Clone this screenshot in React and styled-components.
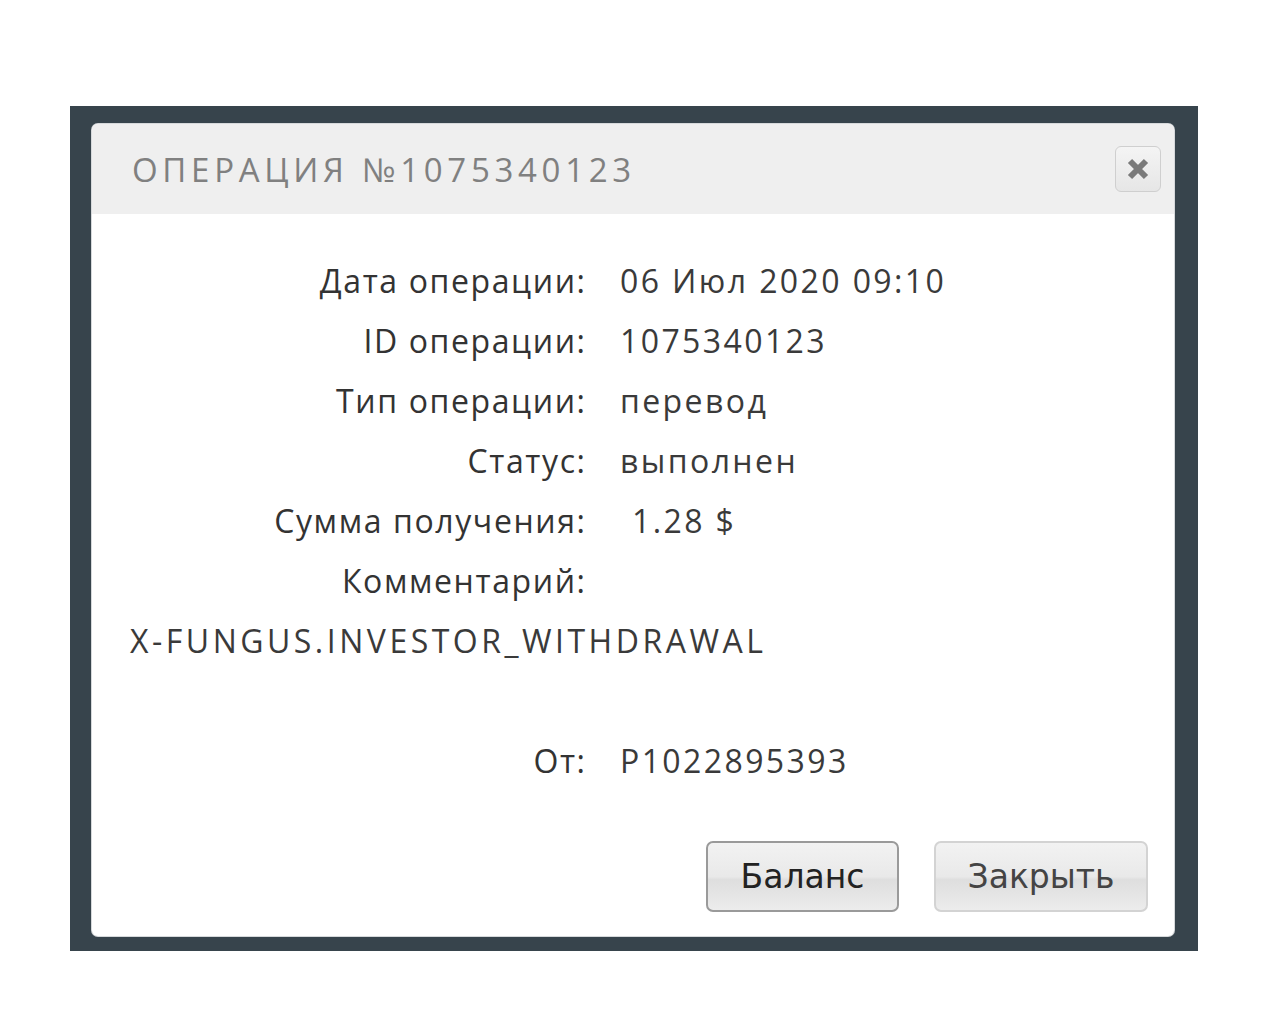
import React from 'react';
import styled, { createGlobalStyle } from 'styled-components';

const Global = createGlobalStyle`
  html, body { margin: 0; padding: 0; background: #fff; }
  body { width: 1280px; height: 1024px; overflow: hidden; }
`;

const Page = styled.div`
  width: 1280px;
  height: 1024px;
  padding: 106px 82px 73px 70px;
  box-sizing: border-box;
`;

const Backdrop = styled.div`
  height: 100%;
  background: #37444c;
  padding: 18px 24px 15px 22px;
  box-sizing: border-box;
`;

const Dialog = styled.div`
  height: 100%;
  background: #fff;
  border-radius: 6px;
  overflow: hidden;
  display: flex;
  flex-direction: column;
  box-shadow: 0 0 0 1px #d6d9db;
`;

const Header = styled.div`
  height: 90px;
  flex: none;
  background: #efefef;
  display: flex;
  align-items: center;
  justify-content: space-between;
  padding: 0 13px 0 40px;
`;

const Title = styled.h1`
  margin: 0;
  font-family: "Open Sans", sans-serif;
  font-weight: 400;
  font-size: 33px;
  letter-spacing: 4.7px;
  color: #808080;
`;

const CloseBtn = styled.button`
  width: 46px;
  height: 46px;
  border: 1px solid #cfcfcf;
  border-radius: 6px;
  background: linear-gradient(#f4f4f4, #e6e6e6);
  display: flex;
  align-items: center;
  justify-content: center;
  padding: 0;
`;

const Body = styled.div`
  flex: 1;
  display: flex;
  flex-direction: column;
  padding: 36px 26px 24px 38px;
`;

const Grid = styled.div`
  display: grid;
  grid-template-columns: 455px 1fr;
  column-gap: 35px;
  grid-auto-rows: 60px;
  align-items: center;
`;

const Label = styled.div`
  font-family: "Open Sans", sans-serif;
  font-size: 32px;
  font-weight: 500;
  letter-spacing: 1.6px;
  margin-right: -1.6px;
  color: #333;
  text-align: right;
`;

const Value = styled.div`
  font-family: "Open Sans", sans-serif;
  font-size: 32px;
  letter-spacing: 2.4px;
  color: #3a3a3a;
  padding-left: ${p => p.$indent || 0}px;
`;

const Comment = styled.div`
  font-family: "Open Sans", sans-serif;
  font-size: 32px;
  letter-spacing: 3.5px;
  color: #3a3a3a;
  height: 60px;
  display: flex;
  align-items: center;
  margin-bottom: 60px;
`;

const Footer = styled.div`
  margin-top: auto;
  display: flex;
  justify-content: flex-end;
  gap: 35px;
`;

const Button = styled.button`
  width: ${p => p.$w}px;
  height: 71px;
  padding: 0;
  border-radius: 7px;
  border: 2px solid ${p => (p.$primary ? '#9a9a9a' : '#d3d3d3')};
  background: linear-gradient(#f2f2f2 0%, #e9e9e9 50%, #dedede 55%, #ececec 100%);
  font-family: "DejaVu Sans", sans-serif;
  font-size: 33px;
  color: ${p => (p.$primary ? '#222' : '#444')};
`;

const rows = [
  ['Дата операции:', '06 Июл 2020 09:10'],
  ['ID операции:', '1075340123'],
  ['Тип операции:', 'перевод'],
  ['Статус:', 'выполнен'],
  ['Сумма получения:', '1.28 $', 12],
  ['Комментарий:', ''],
];

export default function App() {
  return (
    <Page>
      <Global />
      <Backdrop>
        <Dialog>
          <Header>
            <Title>ОПЕРАЦИЯ №1075340123</Title>
            <CloseBtn>
              <svg width="24" height="24" viewBox="0 0 24 24">
                <path d="M4 4 L20 20 M20 4 L4 20" stroke="#7a7a7a" strokeWidth="6" />
              </svg>
            </CloseBtn>
          </Header>
          <Body>
            <Grid>
              {rows.map(([l, v, ind]) => (
                <React.Fragment key={l}>
                  <Label>{l}</Label>
                  <Value $indent={ind}>{v}</Value>
                </React.Fragment>
              ))}
            </Grid>
            <Comment>X-FUNGUS.INVESTOR_WITHDRAWAL</Comment>
            <Grid>
              <Label>От:</Label>
              <Value>P1022895393</Value>
            </Grid>
            <Footer>
              <Button $primary $w={193}>Баланс</Button>
              <Button $w={214}>Закрыть</Button>
            </Footer>
          </Body>
        </Dialog>
      </Backdrop>
    </Page>
  );
}
